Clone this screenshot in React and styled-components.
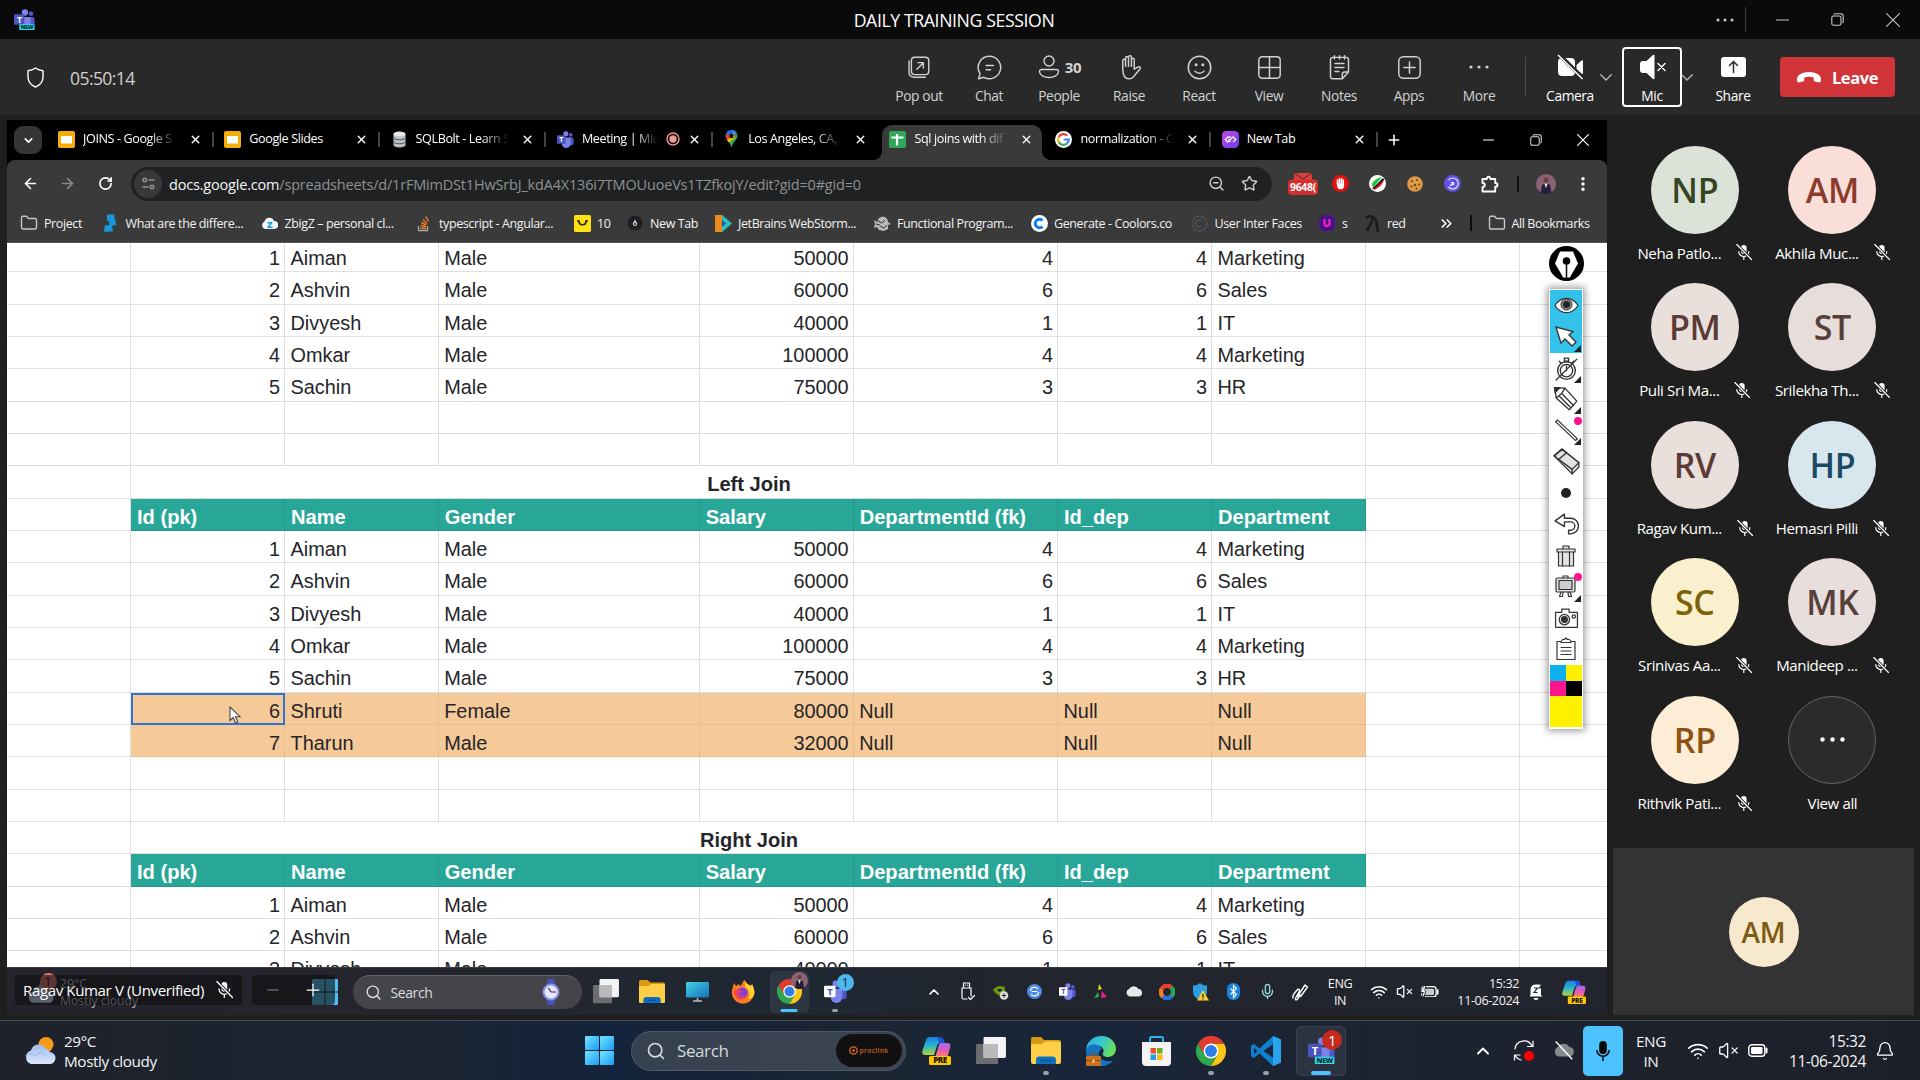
import React from 'react';
import styled, { createGlobalStyle } from 'styled-components';
import {
  ArrowLeft, ArrowRight, RotateCw, Star, ZoomOut, Plus, Minus, X, ChevronDown, ChevronUp, ChevronsRight,
  Wifi, VolumeX, Bell, Mic, Search, Folder, MoreVertical,
} from 'lucide-react';

const Global = createGlobalStyle`
  * { box-sizing: border-box; }
  body { margin: 0; background: #1f1f1f; overflow: hidden; }
  svg { display: block; flex: none; }
`;
const ui = `"Segoe UI", "Open Sans", "Noto Sans", sans-serif`;

/* ---------- shared pieces ---------- */
const Page = styled.div`
  width: 1920px; height: 1080px; display: flex; flex-direction: column;
  background: #1f1f1f; color: #fff; font-family: ${ui}; letter-spacing: -0.025em; white-space: nowrap; overflow: hidden;
`;
const Slot = styled.div`
  width: ${p => p.$w}px; height: ${p => (p.$h ? p.$h + 'px' : '100%')}; margin-left: ${p => p.$ml || 0}px; flex: none;
  display: flex; align-items: center; justify-content: center; position: relative; color: ${p => p.$c || '#fff'};
`;
const Rule = styled.div`
  width: ${p => p.$w || 1}px; height: ${p => p.$h}px; background: ${p => p.$c}; margin-left: ${p => p.$ml || 0}px; flex: none;
`;
const Grow = styled.div`flex: 1;`;

/* ---------- title bar ---------- */
const TitleBar = styled.header`
  height: 39px; flex: none; background: #0a0a0a; display: flex; align-items: center; color: #c8c8c8;
`;
const Side = styled.div`flex: 1 1 0; display: flex; align-items: center; justify-content: ${p => p.$end ? 'flex-end' : 'flex-start'}; padding-left: 14px; height: 100%;`;
const Title = styled.div`font-size: 17.7px; color: #fff; margin-left: -12px; margin-top: 0;`;

/* ---------- meeting toolbar ---------- */
const Toolbar = styled.div`
  height: 76px; flex: none; background: #292929; display: flex; align-items: center; padding-right: 25px;
`;
const Timer = styled.div`font-size: 17.6px; color: #d0d0d0; margin-left: 25px; margin-top: 1px; letter-spacing: -0.035em;`;
const Tool = styled.div`
  width: ${p => p.$w || 70}px; height: 60px; flex: none; margin-left: ${p => p.$ml || 0}px;
  display: flex; flex-direction: column; align-items: center; padding-top: ${p => p.$boxed ? 3 : 5}px;
  color: ${p => p.$bright ? '#fff' : '#d2d2d2'}; font-size: 13.8px; line-height: 18px;
  border: ${p => p.$boxed ? '2px solid #fff' : '0'}; border-radius: 4px;
  > div { height: 30px; display: flex; align-items: center; font-size: 15px; font-weight: 700; gap: 4px; }
  > span { margin-top: 5px; }
`;
const Leave = styled.div`
  width: 115px; height: 40px; margin-left: 17px; border-radius: 4px; background: #d13438; color: #fff;
  display: flex; align-items: center; justify-content: center; gap: 11px; font-weight: 700; font-size: 16.5px; flex: none;
`;

/* ---------- stage ---------- */
const Stage = styled.main`flex: 1; min-height: 0; display: flex; padding: 5px 5px 5px 7px;`;
const Shared = styled.section`width: 1600px; height: 895px; flex: none; display: flex; flex-direction: column; background: #fff; position: relative; overflow: hidden;`;
const TabStrip = styled.div`height: 40px; flex: none; background: #000; display: flex; align-items: center; padding-left: 7px;`;
const TabMenu = styled.div`width: 28px; height: 28px; border-radius: 9px; background: #353535; display: flex; align-items: center; justify-content: center; margin-right: 5.5px;`;
const Tab = styled.div`
  width: ${p => p.$active ? 160 : 166.3}px; height: ${p => p.$active ? 35 : 28}px; flex: none; display: flex; align-items: center;
  margin: ${p => p.$active ? '0 3px' : '-2px 0 0'};
  padding: ${p => p.$active ? '0 7px 7px 7.5px' : '0 10px 0 10.5px'};
  align-self: ${p => p.$active ? 'flex-end' : 'center'};
  background: ${p => p.$active ? '#3b3a3b' : 'transparent'};
  font-size: 12.6px; border-radius: 10px 10px 0 0; position: relative;
  &::after { content: ''; width: 2px; height: 15px; background: ${p => p.$line ? '#444' : 'transparent'}; position: absolute; right: 0; top: 7px; }
`;
const TabFoot = styled.i`
  position: absolute; left: -8px; right: -8px; bottom: 0; height: 8px;
  background: radial-gradient(circle at 0 0, transparent 7.5px, #3b3a3b 8px) left/8px 8px no-repeat,
    radial-gradient(circle at 8px 0, transparent 7.5px, #3b3a3b 8px) right/8px 8px no-repeat;
`;
const TabText = styled.span`
  flex: 1; margin: 0 ${p => p.$tight ? 3 : 10}px 0 8px; overflow: hidden; height: 20px; line-height: 20px;
  mask-image: ${p => p.$fade ? 'linear-gradient(90deg,#000 70%,transparent 100%)' : 'none'};
`;
const BrowserBar = styled.div`
  height: 47px; flex: none; background: #3b3a3b; display: flex; align-items: center; border-radius: 8px 8px 0 0; color: #f4f4f4;
`;
const BarBack = styled.div`background: #000; flex: none;`;
const Omni = styled.div`
  width: 1141px; height: 34px; margin-left: 7px; border-radius: 17px; background: #202122; display: flex; align-items: center; padding-left: 3px; flex: none;
  font-size: 14.5px; color: #8e9194;
  b { font-weight: 400; color: #f5f5f5; }
`;
const TuneBtn = styled.div`width: 28px; height: 28px; border-radius: 50%; background: #38393a; display: flex; align-items: center; justify-content: center; margin-right: 7px;`;
const Url = styled.div`width: 1032px; letter-spacing: -0.013em; padding-top: 1px;`;
const Bookmarks = styled.div`
  height: 36px; flex: none; background: #3b3a3b; display: flex; align-items: center; padding: 0 0 3px 13px; font-size: 12.5px; color: #eee; border-bottom: 1px solid #555;
`;
const Bookmark = styled.div`width: ${p => p.$w}px; display: flex; align-items: center; gap: 6px; flex: none; color: #f2f2f2; `;

/* ---------- sheet ---------- */
const Sheet = styled.div`flex: 1; min-height: 0; overflow: hidden; background: #fff;`;
const Grid = styled.div`
  margin-top: -3px; display: grid; grid-template-columns: 124px 154px 153.7px 261px 154px 204.3px 154px 154px 153.6px 87.4px;
  grid-auto-rows: 32.33px; font-family: "Liberation Sans", Arial, sans-serif; font-size: 19.9px; letter-spacing: 0; color: #222;
`;
const Cell = styled.div`
  border-right: ${p => p.$open ? '0' : '1.5px'} solid ${p => p.$line || '#dfdfe1'}; border-bottom: 1.5px solid ${p => p.$line || '#dfdfe1'};
  background: ${p => p.$bg || '#fff'}; padding: 2px 4px 0 ${p => p.$bold ? 6 : 5.5}px; line-height: 32px; text-align: ${p => p.$align || 'left'};
  grid-column: span ${p => p.$span || 1}; font-weight: ${p => p.$bold ? 700 : 400}; font-size: ${p => p.$bold ? 20.1 : 19.9}px; color: ${p => p.$c || '#25252a'}; overflow: hidden;
  ${p => p.$sel && 'border: 0; outline: 2px solid #2f76d2; outline-offset: -2px; padding-right: 5px; position: relative; overflow: visible;'}
`;
const Pointer = styled.svg`position: absolute; left: 98px; top: 13px;`;

/* ---------- annotation tool ---------- */
const Pen = styled.div`position: absolute; left: 1542px; top: 126px; width: 35px; display: flex; flex-direction: column; gap: 8px;`;
const PenPanel = styled.div`
  background: #fff; border: 1.5px solid #fff; width: 34px; box-shadow: 0 0 7px 2px rgba(0,0,0,.38); height: 440px;
`;
const PenItem = styled.div`
  height: 31.25px; display: flex; align-items: center; justify-content: center; position: relative; background: ${p => p.$on ? '#33c2ea' : '#fff'};
  &::after { content: ''; position: absolute; right: 1px; bottom: 1px; border-left: 7px solid transparent; border-bottom: 7px solid ${p => p.$more ? '#222' : 'transparent'}; }
  &::before { content: ''; position: absolute; right: 0; top: 2px; width: 8px; height: 8px; border-radius: 50%; background: ${p => p.$dot ? '#ff1490' : 'transparent'}; }
`;
const Swatches = styled.div`display: grid; grid-template-columns: 1fr 1fr; grid-template-rows: 15.6px 15.6px 31px;`;
const Swatch = styled.div`background: ${p => p.$c}; grid-column: span ${p => p.$span || 1};`;

/* ---------- shared-screen taskbar ---------- */
const InnerBar = styled.div`
  height: 48px; flex: none; background: linear-gradient(90deg,#25232b 0%,#24262e 30%,#1d2833 50%,#22242e 62%,#22252e 100%);
  border-top: 1px solid #3a3a3e; display: flex; align-items: center; position: relative;
`;
const GhostWeather = styled.div`display: flex; align-items: center; width: 304.5px; padding-left: 20px; gap: 6px; font-size: 12.2px; line-height: 17px; color: #c4c4c4; position: relative; height: 100%; flex: none; letter-spacing: 0;`;
const Overlay = styled.div`
  position: absolute; top: 7px; height: 30px; left: ${p => p.$x}px; width: ${p => p.$w}px; border-radius: 4px;
  background: rgba(14,14,16,.62); display: flex; align-items: center; color: #fff; font-size: 15.1px; padding-left: 8px; gap: 12px;
`;
const InnerSearch = styled.div`
  width: 229px; height: 34px; border-radius: 17px; background: #44444a; border-top: 1px solid #606065; display: flex; align-items: center;
  margin-left: 15px; padding: 0 21px 0 12px; gap: 9px; font-size: 14px; color: #ddd; flex: none;
`;
const TwoLine = styled.div`
  width: ${p => p.$w}px; margin-left: ${p => p.$ml || 0}px; text-align: ${p => p.$align || 'center'}; flex: none;
  font-size: ${p => p.$s}px; line-height: ${p => p.$lh}px; color: #f4f4f4;
`;
const Tile = styled.div`
  width: ${p => p.$s}px; height: ${p => p.$h}px; border-radius: 5px; background: ${p => p.$on ? 'rgba(255,255,255,.07)' : 'transparent'};
  box-shadow: ${p => p.$edge ? 'inset 0 0 0 1px rgba(255,255,255,.07)' : 'none'};
  display: flex; align-items: center; justify-content: center; position: relative;
  &::after { content: ''; position: absolute; bottom: ${p => p.$b || 1}px; left: 50%; transform: translateX(-50%);
    width: ${p => p.$bar || 0}px; height: ${p => p.$bh || 3}px; border-radius: 2px; background: ${p => p.$bar > 10 ? '#4cc2ff' : '#9a9ea6'}; }
`;
const Badge = styled.div`
  position: absolute; top: ${p => p.$y}px; right: ${p => p.$x}px; width: ${p => p.$s}px; height: ${p => p.$h || p.$s}px; border-radius: 50%;
  background: ${p => p.$bg}; color: ${p => p.$c}; font-size: ${p => p.$f}px; display: flex; align-items: center; justify-content: center;
`;

/* ---------- roster ---------- */
const Roster = styled.aside`width: 301px; margin-left: 6px; display: flex; flex-direction: column; flex: none;`;
const People = styled.div`display: grid; grid-template-columns: 137.6px 137.6px; grid-auto-rows: 137.6px; padding: 25.5px 0 0 13px; height: 728px;`;
const Person = styled.div`display: flex; flex-direction: column; align-items: center; gap: 7px;`;
const Avatar = styled.div`
  width: ${p => p.$s || 88}px; height: ${p => p.$s || 88}px; border-radius: 50%; background: ${p => p.$bg}; color: ${p => p.$c};
  font-size: ${p => p.$f || 34}px; font-weight: 600; display: flex; align-items: center; justify-content: center; flex: none;
  border: ${p => p.$ring ? '1px solid #666' : '0'}; letter-spacing: -0.01em;
`;
const PersonName = styled.div`display: flex; align-items: center; justify-content: center; gap: 15px; font-size: 15.1px; line-height: 24px; height: 24px;`;
const SelfTile = styled.div`height: 167px; background: #333; display: flex; align-items: center; justify-content: center;`;

/* ---------- desktop taskbar ---------- */
const Taskbar = styled.footer`
  height: 60px; flex: none; border-top: 1px solid #45484e; display: flex; align-items: center; padding-left: 24px;
  background: linear-gradient(90deg,#1f222b 0%,#1c2532 22%,#14243c 32%,#1b2533 45%,#19263a 56%,#1d2330 72%,#1c2029 100%);
`;
const SearchBox = styled.div`
  width: 275px; height: 40px; border-radius: 20px; background: linear-gradient(90deg,#36414f,#3c4454); border: 1px solid #4e5866; display: flex; align-items: center;
  margin-left: 17px; padding: 0 3px 0 14px; gap: 11px; font-size: 17px; color: #d6d9dd; flex: none;
`;
const Promo = styled.div`width: 66px; height: 33px; border-radius: 17px; background: #111; color: #c9621f; font-size: 6.8px; font-weight: 600; letter-spacing: .3px; display: flex; align-items: center; justify-content: center; gap: 1px;`;
const MicTile = styled.div`width: 40px; height: 50px; border-radius: 5px; background: #4cc2ff; display: flex; align-items: center; justify-content: center; flex: none;`;

/* ---------- drawings ---------- */
const S = ({ w = 24, h, v = '0 0 24 24', children, sw = 1.4, c = 'currentColor' }) => (
  <svg width={w} height={h || w} viewBox={v} fill="none" stroke={c} strokeWidth={sw} strokeLinecap="round" strokeLinejoin="round">{children}</svg>
);
const TeamsLogo = ({ s = 18, badge, light }) => (
  <svg width={s} height={s} viewBox="0 0 24 24">
    <circle cx="19.5" cy="5.5" r="2.6" fill="#5059c9" /><circle cx="12.5" cy="4" r="3.6" fill="#7b83eb" />
    <rect x="15" y="9" width="8.5" height="11" rx="3" fill="#5059c9" /><path d="M7 9h12v9a6 6 0 0 1-12 0z" fill="#7b83eb" />
    <rect x="0" y="6" width="12" height="12" rx="1.2" fill={light ? '#fff' : '#4b53bc'} />
    <text x="6" y="15.6" fontSize="10" fontWeight="700" textAnchor="middle" fill={light ? '#4b53bc' : '#fff'} fontFamily="Open Sans">T</text>
    {badge && <><rect x="6" y="17.5" width="17.5" height="7" rx="1.2" fill="#28dfe3" /><text x="14.8" y="23.2" fontSize="6.4" fontWeight="800" textAnchor="middle" fill="#0b2a3a" fontFamily="Open Sans">NEW</text></>}
  </svg>
);
const ChromeLogo = ({ s = 28 }) => (
  <svg width={s} height={s} viewBox="0 0 48 48">
    <path d="M3.200 12A24 24 0 0 0 24 48L34.400 30 24 24 13.600 30z" fill="#2fa84f" />
    <path d="M24 12H44.800A24 24 0 0 1 24 48L34.400 30 24 24z" fill="#fcc419" />
    <path d="M24 12H44.800A24 24 0 0 0 3.200 12L13.600 30 24 24z" fill="#e33b2e" />
    <circle cx="24" cy="24" r="12" fill="#fff" /><circle cx="24" cy="24" r="9.500" fill="#2f7de9" />
  </svg>
);
const WinLogo = ({ s = 29, dim }) => (
  <svg width={s} height={s} viewBox="0 0 29 29"><defs><linearGradient id="wl" x1="0" y1="0" x2="1" y2="1" gradientUnits="objectBoundingBox"><stop stopColor="#74e6fd" /><stop offset="1" stopColor="#1a9cf5" /></linearGradient></defs>
    <g fill={dim ? '#4fbff0' : 'url(#wl)'}><rect width="14" height="14" rx="1" /><rect x="15" width="14" height="14" rx="1" /><rect y="15" width="14" height="14" rx="1" /><rect x="15" y="15" width="14" height="14" rx="1" /></g></svg>
);
const TaskViewIcon = ({ s = 30 }) => (
  <svg width={s} height={s * 0.93} viewBox="0 0 30 28"><rect y="7" width="22" height="21" rx="1.5" fill="#6c6d70" /><rect x="7.5" width="22.5" height="21" rx="1.5" fill="#f4f4f4" /><rect x="7.5" y="7" width="14.5" height="14" fill="#b9babb" /></svg>
);
const FolderApp = ({ s = 30 }) => (
  <svg width={s} height={s * 0.9} viewBox="0 0 30 27"><path d="M0 2a2 2 0 0 1 2-2h8l3 3h15a2 2 0 0 1 2 2v4H0z" fill="#d99a12" /><path d="M0 7h11l3-2.5h14a2 2 0 0 1 2 2V25a2 2 0 0 1-2 2H2a2 2 0 0 1-2-2z" fill="#ffcf48" /><path d="M5 27v-4a3.5 3.5 0 0 1 3.500-3.500h13A3.500 3.500 0 0 1 25 23v4z" fill="#0f6fc0" /><path d="M10 23.500h10" stroke="#0a4e8c" strokeWidth="1.400" /></svg>
);
const Copilot = ({ s = 29 }) => (
  <svg width={s} height={s} viewBox="0 0 29 29"><defs>
    <linearGradient id="cpa" x1="0" y1="0" x2="0" y2="1"><stop stopColor="#1a7fe8" /><stop offset=".5" stopColor="#29b6c9" /><stop offset="1" stopColor="#b8d434" /></linearGradient>
    <linearGradient id="cpb" x1="0" y1="0" x2="0" y2="1"><stop stopColor="#a06be8" /><stop offset=".5" stopColor="#e45bb8" /><stop offset="1" stopColor="#ff8a4c" /></linearGradient></defs>
    <path d="M8 1h10c2 0 3 1 3.500 3l1 3h-4c-2 0-3 1-3.600 3L12 19H3c-2.500 0-3.300-2-2.500-4.500L4 4c.7-2 2-3 4-3z" fill="url(#cpa)" />
    <path d="M12 1h6c2 0 3 1 3.500 3l1 3.500h-5L15 1z" fill="#1b52d8" />
    <path d="M18 7h7c3 0 4 2 3.200 4.500L26 19c-.7 2-2 3-4 3h-9l3.600-12z" fill="url(#cpb)" />
    <rect x="7" y="20" width="22" height="9" rx="1.500" fill="#ffc700" /><text x="18" y="27.300" fontSize="8" fontWeight="800" textAnchor="middle" fill="#1a1a1a" fontFamily="Open Sans">PRE</text></svg>
);
const Cloudy = ({ s = 32 }) => (
  <svg width={s} height={s * 0.85} viewBox="0 0 32 27"><defs><linearGradient id="cl" x1="0" y1="0" x2="0" y2="1"><stop stopColor="#9fbdf0" /><stop offset="1" stopColor="#dce8fb" /></linearGradient></defs>
    <circle cx="22" cy="7.500" r="7.500" fill="#f59a1b" /><path d="M7.500 27a7 7 0 0 1-.5-13.500A8 8 0 0 1 22 12a6 6 0 0 1 4 3 6 6 0 0 1-1 12z" fill="url(#cl)" /><path d="M1 19c3-4 8-3 10 0 3-4 9-4 11 0" stroke="#86a8e6" fill="none" opacity=".6" /></svg>
);
const Edge = () => (
  <svg width="30" height="30" viewBox="0 0 30 30"><defs><linearGradient id="eg" x1="0" y1="0" x2="1" y2=".4"><stop stopColor="#2fa8e8" /><stop offset=".6" stopColor="#3ac8c8" /><stop offset="1" stopColor="#6ade5a" /></linearGradient></defs>
    <path d="M0 15C0 6 7 0 15.500 0 24 0 30 6 30 13c0 5-4 8-8 8s-6-2-5-4c1-1.500 1-3-.5-5S12 9 8.500 9 1 12 0 15z" fill="url(#eg)" /><path d="M0 15c0-4 5-7.500 9.500-6.500 3 .5 5.500 2.500 6.500 4.500-3 1-4.500 5-2.500 8s9 6 14 3c-3 4-7.500 6-12 6C7 30 0 24 0 15z" fill="#1475c4" />
    <rect x="0" y="20" width="15" height="10" rx="1" fill="#c9731c" /><path d="M5 20v-2h5v2" stroke="#8f4b0c" strokeWidth="1.400" fill="none" /><path d="M0 24.500h15" stroke="#8f4b0c" /><rect x="6.500" y="23.500" width="2" height="3" fill="#ffd071" /></svg>
);
const Store = () => (
  <svg width="29" height="30" viewBox="0 0 29 30"><path d="M8 6V2.500A1.500 1.500 0 0 1 9.500 1h10A1.500 1.500 0 0 1 21 2.500V6" stroke="#28b3ec" strokeWidth="2" fill="none" /><path d="M0 6h29v20a4 4 0 0 1-4 4H4a4 4 0 0 1-4-4z" fill="#f3f3f3" /><rect x="8.500" y="12" width="5.500" height="5.500" fill="#e8502a" /><rect x="15" y="12" width="5.500" height="5.500" fill="#6fae1c" /><rect x="8.500" y="18.500" width="5.500" height="5.500" fill="#1b9fe6" /><rect x="15" y="18.500" width="5.500" height="5.500" fill="#fab61a" /></svg>
);
const VsCode = () => (
  <svg width="30" height="30" viewBox="0 0 30 30"><path d="M22 0 8.500 12.400 3 8 0 9.500v11L3 22l5.500-4.400L22 30l8-3.500v-23z" fill="#0f7fd0" /><path d="M22 8.200v13.600L12.500 15z" fill="#1b2533" /><path d="M3 11.700v6.600L6.200 15z" fill="#1b2533" /><path d="M22 0l8 3.500v23L22 30z" fill="#2ba4ee" /></svg>
);
const MicMuted = ({ s = 16, c = '#fff' }) => (
  <svg width={s} height={s * 1.02} viewBox="0 0 16 16.300"><rect x="5" y="1" width="5.600" height="9" rx="2.800" fill={c} /><path d="M2.800 7.500a5 5 0 0 0 10 0M7.800 12.500v3" stroke={c} strokeWidth="1.200" fill="none" strokeLinecap="round" /><path d="M1 .8 15.200 15" stroke="#1f1f1f" strokeWidth="3" /><path d="M.8.500 15.500 15.500" stroke={c} strokeWidth="1.200" strokeLinecap="round" /></svg>
);
const Restore = ({ s = 13, c = '#c8c8c8' }) => (<S w={s} v="0 0 13 13" sw={1.100} c={c}><rect x=".8" y="3" width="9.200" height="9.200" rx="1.800" /><path d="M3.200 1.200c.3-.4.700-.5 1.300-.5h5.300a2.400 2.400 0 0 1 2.400 2.400v5.300c0 .6-.1 1-.5 1.300" /></S>);
const SlidesIcon = () => (<svg width="17" height="17" viewBox="0 0 17 17"><rect width="17" height="17" rx="2" fill="#f5ae08" /><rect x="3" y="5" width="11" height="7.500" fill="#fff" /></svg>);
const DbIcon = () => (<svg width="17" height="17" viewBox="0 0 17 17"><path d="M2.500 3v11c0 1.500 3 2.500 6 2.500s6-1 6-2.500V3z" fill="#b9c0c4" /><ellipse cx="8.500" cy="3" rx="6" ry="2.500" fill="#e4e8ea" /><path d="M2.500 7c2 2.300 10 2.300 12 0M2.500 11c2 2.300 10 2.300 12 0" stroke="#44525a" fill="none" /></svg>);
const MapPin = () => (<svg width="17" height="18" viewBox="0 0 17 18"><path d="M8.500 0A6 6 0 0 0 2.700 4.200L8.500 7z" fill="#1a73e8" /><path d="M8.500 0a6 6 0 0 1 5.800 4.200L8.500 6z" fill="#4285f4" /><path d="M2.700 4.200C2.200 6.300 2.700 8 4 10l5-5z" fill="#ea4335" /><path d="M14.300 4.200C15.500 10 9.500 11 8.500 18 8 14 5.500 12 4 10l4.500-3z" fill="#34a853" /><path d="M4 10 11 3.500l1 4-6 5z" fill="#fbbc05" /><circle cx="8.500" cy="6" r="2.200" fill="#111" /></svg>);
const SheetsIcon = () => (<svg width="17" height="17" viewBox="0 0 17 17"><rect width="17" height="17" rx="2" fill="#2fa758" /><path d="M2.500 6.500h12M8 3v11.500" stroke="#fff" strokeWidth="2.200" /></svg>);
const GoogleIcon = () => (<svg width="17" height="17" viewBox="0 0 17 17"><circle cx="8.500" cy="8.500" r="8.500" fill="#fff" /><g fill="none" strokeWidth="2.200"><path d="M12.300 4.700A5.300 5.300 0 0 0 3.800 6" stroke="#ea4335" /><path d="M3.800 6a5.300 5.300 0 0 0 0 5" stroke="#fbbc05" /><path d="M3.800 11a5.300 5.300 0 0 0 8 1.700" stroke="#34a853" /><path d="M11.800 12.700a5 5 0 0 0 2-4.200H8.800" stroke="#4285f4" /></g></svg>);
const PurpleIcon = () => (<svg width="17" height="17" viewBox="0 0 17 17"><defs><linearGradient id="pp" x1="0" y1="0" x2="1" y2="1"><stop stopColor="#c04be8" /><stop offset="1" stopColor="#6a3cf0" /></linearGradient></defs><rect width="17" height="17" rx="4.500" fill="url(#pp)" /><path d="M8.500 10.800 6.200 8.500M8.800 6.200 6 5.900 3.300 8.500l2.500 2.600L11 5.900l2.700 2.600-2.700 2.600" stroke="#fff" strokeWidth="1.300" fill="none" /></svg>);
const RecDot = () => (<svg width="14" height="14" viewBox="0 0 14 14"><circle cx="7" cy="7" r="6" fill="none" stroke="#ef9a94" strokeWidth="1.400" /><circle cx="7" cy="7" r="3.700" fill="#ef9a94" /></svg>);
const Photo = ({ s = 20 }) => (<svg width={s} height={s} viewBox="0 0 20 20"><circle cx="10" cy="10" r="10" fill="#8a6273" /><path d="M4 18a8 8 0 0 1 12 0 10 10 0 0 1-12 0zM5 17l1-6 4-2 4 2 1 6-5 3z" fill="#241d3c" /><circle cx="10" cy="6" r="2.600" fill="#6b4438" /><path d="M8.500 9.500h3l-1.500 5z" fill="#f4e8ea" /></svg>);
const Mail = () => (<svg width="30" height="24" viewBox="0 0 30 24"><path d="M6 1h18v7H6z" fill="#d7403d" /><path d="M6 1l9 6 9-6" stroke="#5a2322" fill="none" /><rect x="0" y="7.500" width="30" height="15.500" rx="4" fill="#d42f2f" /><text x="15" y="19.300" fontSize="10.500" fontWeight="700" textAnchor="middle" fill="#fff" fontFamily="Open Sans" letterSpacing="-.3">9648(</text></svg>);
const HandIcon = () => (<svg width="17" height="17" viewBox="0 0 17 17"><circle cx="8.500" cy="8.500" r="8.500" fill="#e4100f" /><path d="M5.500 5v4M7.500 3.800V9M9.500 3.800V9M11.300 5v5" stroke="#fff" strokeWidth="1.600" strokeLinecap="round" /><path d="M4.700 8.500h7.400V11a3.500 3.500 0 0 1-6.800 1z" fill="#fff" /></svg>);
const Feather = () => (<svg width="17" height="17" viewBox="0 0 17 17"><circle cx="8.500" cy="8.500" r="8.500" fill="#fff" /><path d="M3 10C3 6 8 3 13 2L4 13z" fill="#22c43a" /><path d="M5 13 15 4c0 3-4 9-10 11z" fill="#e81e2a" /><path d="M3 14 14 3l1 1.500L5 14z" fill="#0c0c0c" /></svg>);
const Cookie = () => (<svg width="16" height="16" viewBox="0 0 16 16"><circle cx="8" cy="8" r="7.800" fill="#dd9a45" /><g fill="#7b4313"><circle cx="5" cy="5" r="1.100" /><circle cx="10" cy="4" r="1" /><circle cx="8" cy="9" r="1.200" /><circle cx="12" cy="8.500" r="1" /><circle cx="4.500" cy="10.500" r="1" /><circle cx="9.500" cy="12.700" r="1" /></g></svg>);
const PurpleRound = () => (<svg width="17" height="17" viewBox="0 0 17 17"><circle cx="8.500" cy="8.500" r="8.500" fill="#6252e6" /><path d="M4.500 5a5.500 5.500 0 1 1 0 7M6 11l3.500-3.500M6.800 7.500h2.700v2.700" stroke="#e9e6ff" strokeWidth="1.200" fill="none" /></svg>);
const Puzzle = () => (<S w={18} v="0 0 18 18" sw={1.900}><path d="M1.500 4h4.300c-.2-3 3.800-3 3.600 0h4.800v4c3 0 3 3.800 0 3.800v4.700H1.500v-4.300c3-.2 3-4 0-4.200z" /></S>);
const Tune = () => (<S w={13} v="0 0 13 13" sw={1.600}><circle cx="2.800" cy="3" r="1.700" /><path d="M7 3h5M1 10h5" /><circle cx="10" cy="10" r="1.700" /></S>);

const PencilMark = () => (<svg width="18" height="18" viewBox="0 0 18 18"><path d="M5 .500h7.500v6.500H5zM7 6.500l6-1.500 1.500 6-7 1zM3 11l7 .500 1 6-9 .200z" fill="#1597d8" /></svg>);
const ZCloud = () => (<svg width="17" height="14" viewBox="0 0 17 14"><path d="M4 13a4 4 0 0 1-.5-7.500A5 5 0 0 1 13 5a4 4 0 0 1 .5 8z" fill="#eef8fd" /><text x="8.500" y="11.500" fontSize="9" fontWeight="800" textAnchor="middle" fill="#1b9ad0" fontFamily="Open Sans">Z</text></svg>);
const StackIcon = () => (<svg width="14" height="17" viewBox="0 0 14 17"><path d="M1.500 11v4.500h9V11" stroke="#aaa" strokeWidth="1.300" fill="none" /><path d="M3.500 13.300h5.500M3.600 10.500l5.500 1M4.300 7.500l5 2.500M6 4.500l4 4M9 1.500l2.500 5" stroke="#e87a28" strokeWidth="1.500" /></svg>);
const Smile = () => (<svg width="17" height="17" viewBox="0 0 17 17"><rect width="17" height="17" rx="1.500" fill="#ffe010" /><path d="M3 6h2c0 5 7 5 7 0h2" stroke="#222" strokeWidth="1.700" fill="none" /></svg>);
const DarkDrop = () => (<svg width="16" height="16" viewBox="0 0 16 16"><circle cx="8" cy="8" r="7.500" fill="#1e1f22" /><path d="M8 4.500 10 8a2.200 2.200 0 1 1-4 0z" fill="#c9c9c9" /><circle cx="8" cy="9" r="1" fill="#222" /></svg>);
const JB = () => (<svg width="17" height="17" viewBox="0 0 17 17"><path d="M0 0h8v17H0z" fill="#e88a1c" /><path d="M7 0l10 8.500L7 17z" fill="#28c3b8" /><path d="M7 5v7l4-3.500z" fill="#2c4bb8" /></svg>);
const Skull = () => (<svg width="17" height="15" viewBox="0 0 17 15"><path d="M5 2c5-3 9 0 9 4l3 2-3 1v4l-4 2-5-1-2-3-3 1 1-4-1-4 3 2z" fill="#b9b9b9" /><path d="M4 5l4 2 3-3M6 10l4 2 3-3M2 8l4 1" stroke="#333" fill="none" /></svg>);
const CoolC = () => (<svg width="17" height="17" viewBox="0 0 17 17"><circle cx="8.500" cy="8.500" r="8.500" fill="#fff" /><path d="M11.500 5.500a4.200 4.200 0 1 0 0 6" stroke="#0b7ff0" strokeWidth="3" fill="none" /></svg>);
const DimRing = () => (<svg width="17" height="17" viewBox="0 0 17 17"><circle cx="8.500" cy="8.500" r="7.500" fill="none" stroke="#4a5052" strokeWidth="1.400" /><path d="M10.500 6a3.500 3.500 0 1 0 0 5" stroke="#4d5658" strokeWidth="1.500" fill="none" /></svg>);
const UIcon = () => (<svg width="16" height="16" viewBox="0 0 16 16"><rect width="16" height="16" rx="6" fill="#45128a" /><path d="M5.500 4v4.500a2.500 2.500 0 0 0 5 0V4" stroke="#f01fb8" strokeWidth="2.300" fill="none" /></svg>);
const Walker = () => (<svg width="15" height="17" viewBox="0 0 15 17"><path d="M1 3c4-3 8-2 10 2l2 12M8 3C7 8 4 11 2 16" stroke="#1a1a1a" strokeWidth="2.500" fill="none" /></svg>);

const RoundSync = () => (<svg width="15" height="15" viewBox="0 0 15 15"><circle cx="7.500" cy="7.500" r="7.500" fill="#4b8ae6" /><path d="M3.300 7A4.200 4.200 0 0 1 11 5M11.700 8A4.200 4.200 0 0 1 4 10M4.500 7.500h6" stroke="#fff" strokeWidth="1.200" fill="none" /></svg>);
const Swirl = () => (<svg width="16" height="16" viewBox="0 0 16 16"><g fill="none" strokeWidth="4.500"><path d="M2.800 5A5.700 5.700 0 0 1 12 3.500" stroke="#e8402f" /><path d="M12 3.500A5.700 5.700 0 0 1 12.500 12" stroke="#2ca84e" /><path d="M12.500 12A5.700 5.700 0 0 1 4 12.500" stroke="#2d6de0" /><path d="M4 12.500A5.700 5.700 0 0 1 2.800 5" stroke="#f0801c" /></g></svg>);
const Shield = () => (<svg width="17" height="18" viewBox="0 0 17 18"><path d="M8 0c2 2 4.500 2.500 7 2.500V8c0 5-3 7.500-7 9-4-1.500-7-4-7-9V2.500C3.500 2.500 6 2 8 0z" fill="#2aa0e0" /><path d="M11 7l6 10.500H5z" fill="#fcc92a" /><path d="M11 11v3.500M11 15.500v1" stroke="#222" strokeWidth="1.300" /></svg>);
const BatteryIcon = ({ w = 20, charge }) => (<svg width={w} height={w * 0.65} viewBox="0 0 20 13"><rect x=".8" y=".8" width="16" height="11.400" rx="3" fill="none" stroke="#fff" strokeWidth="1.400" /><rect x="3" y="3" width="11.500" height="7" rx="1.200" fill={charge ? '#ccc' : '#fff'} /><path d="M18.500 4.500v4" stroke="#fff" strokeWidth="2" strokeLinecap="round" />{charge && <path d="M5 0 1 6.500h3L2.500 12" stroke="#22252e" strokeWidth="3" fill="#fff" />}{charge && <path d="M4.500 0 1 6h3L2.500 11" stroke="#fff" strokeWidth="1.300" fill="#fff" />}</svg>);
const Usb = () => (<S w={15} h={19} v="0 0 15 19" sw={1.200}><path d="M3.500 6V1h6v5M2 6h9v8M2 6v9.500c0 1 .6 1.500 1.500 1.500H7M5.300 3.200h.1M7.600 3.200h.1M8.500 15.500l2 2 4-4" /></S>);
const Nvidia = () => (<svg width="17" height="17" viewBox="0 0 17 17"><path d="M1 7c3-4 7-5 12-3v9c-4 1-9-1-12-6z" fill="#5f9400" /><path d="M4 7c2-2.500 5-2.500 7 0-2 3-5 3-7 0z" fill="#22252e" stroke="#9cc83a" /><circle cx="12" cy="12.500" r="4.300" fill="#ddd" /><path d="M9.800 12.500h4.400M12 10.300v4.400" stroke="#333" /></svg>);
const ColorFan = () => (<svg width="15" height="17" viewBox="0 0 15 17"><path d="M6 1l3 5-4 1z" fill="#e8d81c" /><path d="M5 9l-4 6 5-1z" fill="#2bb04a" /><path d="M9 8l5 6-6 1z" fill="#e8208c" /></svg>);
const CloudSmall = ({ off, w = 18 }) => (<svg width={w} height={w * 0.85} viewBox="0 0 20 17"><path d="M5 14a4.500 4.500 0 0 1-.5-8.500A6 6 0 0 1 15 5.500 4.300 4.300 0 0 1 15.500 14z" fill={off ? '#85888d' : '#e9e9ea'} />{off && <path d="M2.500.5l15 16" stroke="#fff" strokeWidth="1.300" />}</svg>);
const Pen2 = () => (<S w={18} v="0 0 18 18" sw={1.400}><path d="M2 15c-1-3 2-5 4-8 2-2 3 0 2 2-1 3-5 7-3 8 2 0 3-3 4-5M8 11l6-9 2.500 2L10 13l-3 1z" /></S>);
const Watch = () => (<svg width="19" height="26" viewBox="0 0 19 26"><path d="M5.500 0h7l1 7h-9zM4.500 19h9l-1 7h-7z" fill="#4c53b8" /><circle cx="9" cy="13" r="8.500" fill="#8c90e8" /><circle cx="9" cy="13" r="6.500" fill="#e8e8fb" /><path d="M9 13 6.500 9M9 13h5" stroke="#333" strokeWidth="1.200" /></svg>);
const Monitor = () => (<svg width="23" height="20" viewBox="0 0 23 20"><defs><linearGradient id="mo" x1="0" y1="0" x2="1" y2="1"><stop stopColor="#46d2e8" /><stop offset="1" stopColor="#1570b8" /></linearGradient></defs><rect width="23" height="15.500" rx="1" fill="url(#mo)" /><path d="M11.500 16v3M7 19h9" stroke="#bbb" strokeWidth="1.600" /></svg>);
const Firefox = () => (<svg width="24" height="24" viewBox="0 0 24 24"><path d="M3 3l2 3 3-2 1 2c2 0 2-5 5-6 0 3 4 5 6 6l1-2c2 4 3 8 2 11a11.300 11.300 0 0 1-22 0C0 11 2 7 3 3z" fill="#ff7a1f" /><path d="M14 0c0 3 4 5 6 6l1-2c2 4 3 8 2 11-2 3-4 4-6 4 3-5 1-10-3-12z" fill="#ffd22e" /><circle cx="11" cy="13" r="5.500" fill="#7a3fe0" /><path d="M2 12c2-3 5-4 8-2l2 2-4 1c1 3 5 4 8 1-1 5-6 7-10 5z" fill="#f0405a" opacity=".75" /></svg>);

const tools = [
  ['Pop out', <S w={26} sw={1.300}><rect x="5" y="3" width="16" height="16" rx="3" /><path d="M2.800 6.500V17a4.500 4.500 0 0 0 4.500 4.500h10.500M10 14l6-6M11 8h5v5" /></S>],
  ['Chat', <S w={27} sw={1.300}><path d="M12 2a10 10 0 1 1-5 18.700L2.300 22l1.300-4.500A10 10 0 0 1 12 2zM9 10.200h6.500M9 14h4" /></S>],
  ['People', <><S w={24} sw={1.400}><circle cx="12" cy="6" r="5" /><path d="M4.500 14.500h15c1.200 0 2 .8 2 2 0 3.500-4.500 6-9.500 6s-9.500-2.500-9.500-6c0-1.200.8-2 2-2z" /></S>30</>],
  ['Raise', <S w={27} sw={1.300}><path d="M6 13V6c0-1.800 2.500-1.800 2.500 0v5V3.500c0-1.800 2.600-1.800 2.600 0V11 2.800c0-1.800 2.600-1.800 2.600 0V11 5c0-1.700 2.500-1.700 2.500 0v8.500l3.500-2c1.500-.6 2.600.5 1.600 1.800L17 18.500C15.500 20.800 14 22 11.500 22 7.500 22 6 18 6 13z" /></S>],
  ['React', <S w={27} sw={1.300}><circle cx="12" cy="12" r="10" /><path d="M8 15.200c2 2.500 6 2.500 8 0" /><circle cx="9" cy="9.500" r=".7" fill="currentColor" /><circle cx="15" cy="9.500" r=".7" fill="currentColor" /></S>],
  ['View', <S w={27} sw={1.300}><rect x="2.500" y="2.500" width="19" height="19" rx="3" /><path d="M12 2.500v19M2.500 12h19" /></S>],
  ['Notes', <S w={27} sw={1.300}><path d="M4 5a2 2 0 0 1 2-2h12a2 2 0 0 1 2 2v11l-5.500 6H6a2 2 0 0 1-2-2zM20 16h-3.500a2 2 0 0 0-2 2v4M7.500 1.500v3M12 1.500v3M16.500 1.500v3M8 8.500h8M8 12h8M8 15.500h3.500" /></S>],
  ['Apps', <S w={27} sw={1.300}><rect x="2.500" y="2.500" width="19" height="19" rx="4" /><path d="M12 7v10M7 12h10" /></S>],
  ['More', <S w={24} sw={0}><g fill="currentColor"><circle cx="4" cy="12" r="1.600" /><circle cx="12" cy="12" r="1.600" /><circle cx="20" cy="12" r="1.600" /></g></S>],
];
const tabs = [
  ['JOINS - Google S', <SlidesIcon />, 1, 1], ['Google Slides', <SlidesIcon />, 0, 1], ['SQLBolt - Learn S', <DbIcon />, 1, 1],
  ['Meeting | Mic', <TeamsLogo s={17} />, 1, 1, 'rec'], ['Los Angeles, CA,', <MapPin />, 1, 0], ['Sql joins with dif', <SheetsIcon />, 1, 0, 'active'],
  ['normalization - G', <GoogleIcon />, 1, 1], ['New Tab', <PurpleIcon />, 0, 1],
];
const marks = [
  ['Project', <Folder size={18} strokeWidth={1.800} color="#c8c8c8" />, 81.500], ['What are the differe...', <PencilMark />, 159], ['ZbigZ – personal cl...', <ZCloud />, 154.500],
  ['typescript - Angular...', <StackIcon />, 158], ['10', <Smile />, 53], ['New Tab', <DarkDrop />, 88], ['JetBrains WebStorm...', <JB />, 159],
  ['Functional Program...', <Skull />, 157], ['Generate - Coolors.co', <CoolC />, 160.500], ['User Inter Faces', <DimRing />, 127.500], ['s', <UIcon />, 45], ['red', <Walker />, 70],
];
const people = [
  ['NP', 'Neha Patlo...', '#dbe3d8', '#35451f'], ['AM', 'Akhila Muc...', '#fadfd8', '#8b3a2c'], ['PM', 'Puli Sri Ma...', '#e9dfdb', '#5c3a36'],
  ['ST', 'Srilekha Th...', '#e7dedb', '#57403b'], ['RV', 'Ragav Kum...', '#e9dfdb', '#5c3a36'], ['HP', 'Hemasri Pilli', '#d8e6ed', '#1d4a63'],
  ['SC', 'Srinivas Aa...', '#fbf0ce', '#7b6108'], ['MK', 'Manideep ...', '#e8dedb', '#57403b'], ['RP', 'Rithvik Pati...', '#fdecd6', '#8a5312'],
];
const rows = [
  ['1', 'Aiman', 'Male', '50000', '4', '4', 'Marketing'], ['2', 'Ashvin', 'Male', '60000', '6', '6', 'Sales'], ['3', 'Divyesh', 'Male', '40000', '1', '1', 'IT'],
  ['4', 'Omkar', 'Male', '100000', '4', '4', 'Marketing'], ['5', 'Sachin', 'Male', '75000', '3', '3', 'HR'],
];
const extra = [['6', 'Shruti', 'Female', '80000', 'Null', 'Null', 'Null'], ['7', 'Tharun', 'Male', '32000', 'Null', 'Null', 'Null']];
const head = ['Id (pk)', 'Name', 'Gender', 'Salary', 'DepartmentId (fk)', 'Id_dep', 'Department'];

const Row = ({ data, bg, line, sel }) => (
  <>
    <Cell />
    {data.map((t, i) => {
      const num = /^\d+$/.test(t);
      return (
        <Cell key={i} $bg={bg} $line={line} $align={num ? 'right' : 'left'} $sel={sel && i === 0}>
          {t}
          {sel && i === 0 && <Pointer width="13" height="19" viewBox="0 0 13 19"><path d="M1 1v13.500l3.200-3 2.300 5.500 2.300-1-2.300-5.300H11z" fill="#fff" stroke="#444" strokeWidth="1.100" /></Pointer>}
        </Cell>
      );
    })}
    <Cell /><Cell $open />
  </>
);
const TitleRow = ({ text }) => (<><Cell /><Cell $span={7} $bold $align="center">{text}</Cell><Cell /><Cell $open /></>);
const HeadRow = () => (<><Cell />{head.map(h => <Cell key={h} $bold $bg="#28a698" $line="#239888" $c="#fff">{h}</Cell>)}<Cell /><Cell $open /></>);
const EmptyRow = () => <Row data={['', '', '', '', '', '', '']} />;

const G = '#e3e3e3', K = '#333';
const penItems = [
  [<svg width="25" height="17" viewBox="0 0 25 17"><path d="M1 8.500C7-1 18-1 24 8.500 18 18 7 18 1 8.500z" fill="#fff" stroke={K} strokeWidth="1.200" /><circle cx="12.500" cy="7.500" r="5.500" fill="#888" stroke={K} /><circle cx="12.500" cy="7.500" r="3.500" fill="#222" /></svg>, 1],
  [<svg width="24" height="24" viewBox="0 0 24 24"><path d="M2 2l5 16 4-4 7 7 4-4-7-7 4-3.500z" fill="#fff" stroke={K} strokeWidth="1.300" /></svg>, 1, 1],
  [<S w={25} c={K} sw={1.300}><circle cx="12" cy="14" r="8.500" /><circle cx="12" cy="14" r="6" /><path d="M10 2h4v3h-4zM5 5l2 2M19 5l-2 2M12 9.500V14M2 23 22 3" /></S>, 0, 1],
  [<S w={26} c={K} sw={1.200}><path d="M1.500 1.500 11 2l11 12-7 8L3 11z" fill="#fff" /><path d="M1.500 1.500h5L2 6z" fill={K} /><path d="M11 2 8 7l-5 4M8 7l11 11M5.500 9l11 11" /></S>, 0, 1],
  [<S w={25} c={K} sw={1.200}><path d="M1.500 3.500l2-1.500 19 18-2 1.500z" fill="#fff" /></S>, 0, 1, 1],
  [<S w={27} c={K} sw={1.200}><path d="M1 7l7-6 15 12v4l-6 6z" fill={G} /><path d="M1 7l7-6 4 3.200-7 6zM23 13l-6 6M17 23v-4L5 10" /></S>],
  [<svg width="10" height="10" viewBox="0 0 10 10"><circle cx="5" cy="5" r="5" fill="#222" /></svg>],
  [<S w={25} c={K} sw={1.300}><path d="M1 8.500 10 2v4h6a7.500 7.500 0 0 1 0 15h-2v-3.500h2a4 4 0 0 0 0-8h-6V14z" fill="#fff" /></S>],
  [<S w={24} c={K} sw={1.200}><path d="M3 5h18v3H3zM9 5V2h6v3M4.500 8v14h15V8" fill={G} /><path d="M8.500 8v14M15.500 8v14" /></S>],
  [<S w={24} c={K} sw={1.200}><rect x="2" y="3" width="19" height="14" rx="1.500" fill={G} /><rect x="5" y="5.500" width="13" height="9" fill="#ccc" /><path d="M9 3V1h5v2M7 17l-1.500 4.500h3L9 17M14 17l.500 4.500h3L16 17" /></S>, 0, 1, 1],
  [<S w={25} c={K} sw={1.200}><path d="M1.500 6h6V3h7v3h8v14.500h-21z" fill="#fff" /><circle cx="10" cy="13" r="5" fill={G} /><circle cx="10" cy="13" r="2.800" fill={K} /><circle cx="19" cy="10" r="1.600" /></S>],
  [<S w={24} c={K} sw={1.200}><path d="M3 4.500h4l1.500-2h2l1.500-1.500L13.500 2.500h2l1.500 2h4V22.500H3zM7 5.500h10M7 10.500h10M7 14h10M7 17.500h10" /></S>],
];
const Lang = p => <TwoLine {...p}>ENG<br />IN</TwoLine>;
const Clock = p => <TwoLine {...p}>15:32<br />11-06-2024</TwoLine>;

export default function App() {
  return (
    <Page>
      <Global />
      <TitleBar>
        <Side><TeamsLogo s={21} badge /></Side>
        <Title>DAILY TRAINING SESSION</Title>
        <Side $end>
          <Slot $w={40}><S w={18} v="0 0 18 4" h={4} sw={0}><g fill="#c8c8c8"><circle cx="2" cy="2" r="1.500" /><circle cx="9" cy="2" r="1.500" /><circle cx="16" cy="2" r="1.500" /></g></S></Slot>
          <Rule $h={25} $c="#3c3c3c" />
          <Slot $w={55} $ml={9}><S w={13} h={2} v="0 0 13 2" sw={1.100} c="#c8c8c8"><path d="M.5 1h12" /></S></Slot>
          <Slot $w={55}><Restore /></Slot>
          <Slot $w={55}><S w={14} v="0 0 14 14" sw={1.100} c="#c8c8c8"><path d="M.6.600l12.800 12.800M13.400.600.600 13.400" /></S></Slot>
        </Side>
      </TitleBar>

      <Toolbar>
        <Slot $w={19} $ml={26}><S w={17} h={21} v="0 0 17 21" sw={1.400}><path d="M8.500 1C11 2.800 13 3.500 16 3.700V10c0 5-2.800 8-7.500 10C3.800 18 1 15 1 10V3.700C4 3.500 6 2.800 8.500 1z" /></S></Slot>
        <Timer>05:50:14</Timer>
        <Grow />
        {tools.map(([t, i]) => <Tool key={t}><div>{i}</div><span>{t}</span></Tool>)}
        <Rule $h={40} $c="#4a4a4a" $ml={10.500} />
        <Tool $w={60} $ml={14.500} $bright>
          <div><svg width="27" height="26" viewBox="0 0 27 26"><rect x="1" y="4" width="17" height="18" rx="4" fill="#fff" /><path d="M19.500 11l5-4.500c.6-.4 1.500 0 1.500.8V19c0 .8-.9 1.200-1.500.8l-5-4.500z" fill="#fff" /><path d="M2 .5 27 25" stroke="#292929" strokeWidth="4" /><path d="M1 1l24.500 24" stroke="#fff" strokeWidth="1.500" /></svg></div>
          <span>Camera</span>
        </Tool>
        <Slot $w={12} $c="#bbb"><S w={12} h={7} v="0 0 12 7" sw={1.300}><path d="M.8.800 6 6 11.200.8" /></S></Slot>
        <Tool $w={60} $ml={10} $boxed $bright>
          <div><svg width="27" height="26" viewBox="0 0 27 26"><path d="M15.500 1.500v23c0 .8-.8 1-1.500.5L7.500 19H4a3 3 0 0 1-3-3v-6a3 3 0 0 1 3-3h3.500L14 1c.7-.6 1.500-.3 1.500.5z" fill="#fff" /><path d="M19 9.500l7 7M26 9.500l-7 7" stroke="#fff" strokeWidth="1.400" strokeLinecap="round" /></svg></div>
          <span>Mic</span>
        </Tool>
        <Slot $w={10} $c="#bbb"><S w={12} h={7} v="0 0 12 7" sw={1.300}><path d="M.8.800 6 6 11.200.8" /></S></Slot>
        <Tool $w={60} $ml={11} $bright>
          <div><svg width="25" height="20" viewBox="0 0 25 20"><rect width="25" height="20" rx="3" fill="#fff" /><path d="M12.500 15.500V5M8.500 8.500l4-4 4 4" stroke="#292929" strokeWidth="1.500" fill="none" strokeLinecap="round" /></svg></div>
          <span>Share</span>
        </Tool>
        <Leave><svg width="24" height="11" viewBox="0 0 24 11"><path d="M12 0C19 0 24 3 24 7c0 3-.8 3.800-2.500 3.300L18 9.400c-1-.3-1.300-1-1.300-2V5.600c-3-1-6.400-1-9.400 0v1.800c0 1-.3 1.700-1.300 2l-3.500.9C.8 10.800 0 10 0 7c0-4 5-7 12-7z" fill="#fff" /></svg>Leave</Leave>
      </Toolbar>

      <Stage>
        <Shared>
          <TabStrip>
            <TabMenu><ChevronDown size={13} strokeWidth={3} /></TabMenu>
            {tabs.map(([t, icon, fade, line, kind], i) => (
              <Tab key={i} $active={kind === 'active'} $line={line}>
                {kind === 'active' && <TabFoot />}
                {icon}<TabText $fade={fade} $tight={kind === 'rec'}>{t}</TabText>
                {kind === 'rec' && <Slot $w={25} $h={20}><RecDot /></Slot>}
                <Slot $w={17} $h={20}><X size={13} strokeWidth={2.600} /></Slot>
              </Tab>
            ))}
            <Slot $w={22} $ml={5}><Plus size={16} strokeWidth={2.300} /></Slot>
            <Grow />
            <Slot $w={47}><S w={11} h={2} v="0 0 11 2" sw={1.200}><path d="M.5 1h10" /></S></Slot>
            <Slot $w={47}><Restore s={12} c="#ddd" /></Slot>
            <Slot $w={48}><S w={12} v="0 0 12 12" sw={1.200}><path d="M.6.600l10.800 10.800M11.400.600.600 11.400" /></S></Slot>
          </TabStrip>
          <BarBack><BrowserBar>
            <Slot $w={38} $ml={4}><ArrowLeft size={17} strokeWidth={2.300} /></Slot>
            <Slot $w={37} $c="#8a8a8a"><ArrowRight size={17} strokeWidth={2.300} /></Slot>
            <Slot $w={38}><RotateCw size={15} strokeWidth={2.600} /></Slot>
            <Omni>
              <TuneBtn><Tune /></TuneBtn>
              <Url><b>docs.google.com</b>/spreadsheets/d/1rFMimDSt1HwSrbJ_kdA4X136i7TMOUuoeVs1TZfkojY/edit?gid=0#gid=0</Url>
              <Slot $w={30} $c="#d0d0d0"><ZoomOut size={17} strokeWidth={2} /></Slot>
              <Slot $w={36} $c="#d0d0d0"><Star size={17} strokeWidth={2} /></Slot>
            </Omni>
            <Slot $w={38} $ml={11.500}><Mail /></Slot>
            <Slot $w={37.500}><HandIcon /></Slot>
            <Slot $w={37.500}><Feather /></Slot>
            <Slot $w={37.500}><Cookie /></Slot>
            <Slot $w={37.500}><PurpleRound /></Slot>
            <Slot $w={37.500}><Puzzle /></Slot>
            <Rule $w={2} $h={16} $c="#111" $ml={8} />
            <Slot $w={37} $ml={8.500}><Photo /></Slot>
            <Slot $w={37}><MoreVertical size={18} strokeWidth={2.600} /></Slot>
          </BrowserBar></BarBack>
          <Bookmarks>
            {marks.map(([t, icon, w], i) => <Bookmark key={i} $w={w}><Slot $w={18} $h={18}>{icon}</Slot>{t}</Bookmark>)}
            <Slot $w={20} $ml={3.500}><ChevronsRight size={17} strokeWidth={2.300} /></Slot>
            <Rule $w={2} $h={16} $c="#0c0c0c" $ml={13} />
            <Bookmark $w={120}><Slot $w={18} $h={18} $ml={16}><Folder size={18} strokeWidth={1.800} color="#c8c8c8" /></Slot>All Bookmarks</Bookmark>
          </Bookmarks>

          <Sheet>
            <Grid>
              {rows.map(r => <Row key={r[0]} data={r} />)}
              <EmptyRow /><EmptyRow />
              <TitleRow text="Left Join" /><HeadRow />
              {rows.map(r => <Row key={r[0]} data={r} />)}
              {extra.map((r, i) => <Row key={r[0]} data={r} bg="#f6c998" line="#e6bc90" sel={i === 0} />)}
              <EmptyRow /><EmptyRow />
              <TitleRow text="Right Join" /><HeadRow />
              {rows.slice(0, 3).map(r => <Row key={r[0]} data={r} />)}
            </Grid>
          </Sheet>

          <InnerBar>
            <GhostWeather><Cloudy s={27} /><div>29°C<br />Mostly cloudy</div><Badge $x={255} $y={5} $s={17} $bg="#dd7571" $c="#111" $f={12}>1</Badge></GhostWeather>
            <WinLogo s={26} dim />
            <InnerSearch><Search size={17} strokeWidth={2} /><span>Search</span><Grow /><Watch /></InnerSearch>
            <Slot $w={46} $ml={1}><TaskViewIcon s={26} /></Slot>
            <Slot $w={46}><FolderApp s={26} /></Slot>
            <Slot $w={46}><Monitor /></Slot>
            <Slot $w={45.500}><Firefox /></Slot>
            <Slot $w={46}><Tile $s={39} $h={42} $on $bar={17} $b={0}><ChromeLogo s={25} /><Badge $x={1} $y={2} $s={16}><Photo s={17} /></Badge></Tile></Slot>
            <Slot $w={46}><Tile $s={39} $h={42} $bar={6} $b={0}><TeamsLogo s={23} light /><Badge $x={1} $y={3} $s={17} $bg="#4db7ee" $c="#14222e" $f={12}>1</Badge></Tile></Slot>
            <Slot $w={33.300} $ml={59.500}><ChevronUp size={16} strokeWidth={2.500} /></Slot>
            <Slot $w={33.300}><Usb /></Slot>
            <Slot $w={33.300}><Nvidia /></Slot>
            <Slot $w={33.300}><RoundSync /></Slot>
            <Slot $w={33.300}><TeamsLogo s={17} light /></Slot>
            <Slot $w={33.300}><ColorFan /></Slot>
            <Slot $w={33.300}><CloudSmall /></Slot>
            <Slot $w={33.300}><Swirl /></Slot>
            <Slot $w={33.300}><Shield /></Slot>
            <Slot $w={33.300}><svg width="13" height="17" viewBox="0 0 13 17"><rect width="13" height="17" rx="6" fill="#1683e0" /><path d="M3.500 5.500l6 6-3 3v-12l3 3-6 6" stroke="#fff" strokeWidth="1.200" fill="none" /></svg></Slot>
            <Slot $w={33.300} $c="#8fd0d4"><Mic size={17} strokeWidth={2} /></Slot>
            <Slot $w={33.300}><Pen2 /></Slot>
            <Lang $w={46} $s={12.600} $lh={17} />
            <Slot $w={24} $ml={4}><Wifi size={18} strokeWidth={2} /></Slot>
            <Slot $w={26}><VolumeX size={17} strokeWidth={1.800} /></Slot>
            <Slot $w={26}><BatteryIcon w={18} charge /></Slot>
            <Clock $w={76} $s={12.600} $lh={17} $align="right" />
            <Slot $w={26} $ml={4}><svg width="17" height="17" viewBox="0 0 17 17"><path d="M2.500 12V6.500A5 5 0 0 1 8 1.500h5V12l1.500 1.500H1.500z" fill="#fff" /><path d="M5.500 15a2.500 2 0 0 0 5 0z" fill="#fff" /><path d="M6 5h3.500L6 9.500h3.500M11.500 2h3L11.500 5h3" stroke="#22252e" strokeWidth="1.200" fill="none" /></svg></Slot>
            <Slot $w={40} $ml={5}><Copilot s={24} /></Slot>
            <Overlay $x={8} $w={227}>Ragav Kumar V (Unverified)<MicMuted s={17} /></Overlay>
            <Overlay $x={245} $w={83}><Slot $w={26} $ml={0} $c="#666"><Minus size={18} strokeWidth={1.800} /></Slot><Slot $w={26} $ml={2}><Plus size={20} strokeWidth={1.500} /></Slot></Overlay>
          </InnerBar>

          <Pen>
            <svg width="35" height="35" viewBox="0 0 35 35"><circle cx="17.500" cy="17.500" r="17.500" fill="#000" /><path d="M11 5.500h13l5 12-6.500 11-1.500 3h-7l-1.500-3L6 17.500z" fill="#fff" /><path d="M17.500 15v16.500" stroke="#000" strokeWidth="1.500" /><circle cx="17.500" cy="15" r="3.800" fill="#000" /></svg>
            <PenPanel>
              {penItems.map(([icon, on, more, dot], i) => <PenItem key={i} $on={on} $more={more} $dot={dot}>{icon}</PenItem>)}
              <Swatches><Swatch $c="#0db0ee" /><Swatch $c="#fff000" /><Swatch $c="#ff1490" /><Swatch $c="#000" /><Swatch $c="#fff000" $span={2} /></Swatches>
            </PenPanel>
          </Pen>
        </Shared>

        <Roster>
          <People>
            {people.map(([i, n, bg, c]) => <Person key={i + n}><Avatar $bg={bg} $c={c}>{i}</Avatar><PersonName>{n}<MicMuted /></PersonName></Person>)}
            <Person>
              <Avatar $bg="#2b2b2b" $c="#fff" $ring><S w={25} h={5} v="0 0 25 5" sw={0}><g fill="#fff"><circle cx="2.500" cy="2.500" r="2.200" /><circle cx="12.500" cy="2.500" r="2.200" /><circle cx="22.500" cy="2.500" r="2.200" /></g></S></Avatar>
              <PersonName>View all</PersonName>
            </Person>
          </People>
          <SelfTile><Avatar $s={70} $f={28} $bg="#f7e9cd" $c="#7d5a12">AM</Avatar></SelfTile>
        </Roster>
      </Stage>

      <Taskbar>
        <Cloudy s={32} />
        <TwoLine $w={140} $ml={8} $s={15.300} $lh={20} $align="left">29°C<br />Mostly cloudy</TwoLine>
        <Slot $w={30} $ml={380}><WinLogo /></Slot>
        <SearchBox><Search size={20} strokeWidth={2} /><span>Search</span><Grow /><Promo><svg width="9" height="9" viewBox="0 0 9 9"><circle cx="4.500" cy="4.500" r="3.700" fill="none" stroke="#e8681f" strokeWidth="1.300" /><circle cx="4.500" cy="4.500" r="1.300" fill="#e8681f" /></svg>proclink</Promo></SearchBox>
        <Slot $w={55} $ml={2.500}><Copilot /></Slot>
        <Slot $w={55}><TaskViewIcon /></Slot>
        <Slot $w={55}><Tile $s={50} $h={50} $bar={6} $bh={4}><FolderApp /></Tile></Slot>
        <Slot $w={55}><Edge /></Slot>
        <Slot $w={55}><Store /></Slot>
        <Slot $w={55}><Tile $s={50} $h={50} $bar={6} $bh={4}><ChromeLogo s={30} /></Tile></Slot>
        <Slot $w={55}><Tile $s={50} $h={50} $bar={6} $bh={4}><VsCode /></Tile></Slot>
        <Slot $w={55}><Tile $s={50} $h={50} $on $edge $bar={20} $bh={4}><TeamsLogo s={27} badge /><Badge $x={4} $y={4} $s={20} $bg="#c42b1c" $c="#fff" $f={15}>1</Badge></Tile></Slot>
        <Grow />
        <Slot $w={40}><ChevronUp size={20} strokeWidth={2.200} /></Slot>
        <Slot $w={41}><S w={22} v="0 0 22 22" sw={1.200}><path d="M2 9A9 9 0 0 1 19 6M20 1v5.500h-5.500M1.500 20v-5H7M2 15a9 9 0 0 0 6 5" /><circle cx="16" cy="16" r="5" fill="#f00" stroke="none" /></S></Slot>
        <Slot $w={39}><CloudSmall off w={22} /></Slot>
        <MicTile><svg width="14" height="20" viewBox="0 0 14 20"><rect x="3.200" y="0" width="7.600" height="13" rx="3.800" fill="#0a0a0a" /><path d="M.8 9a6.200 6.200 0 0 0 12.400 0M7 15.500V20" stroke="#0a0a0a" strokeWidth="1.500" fill="none" /></svg></MicTile>
        <Lang $w={56} $s={15.300} $lh={20} />
        <Slot $w={30} $ml={4}><Wifi size={22} strokeWidth={1.800} /></Slot>
        <Slot $w={30}><VolumeX size={21} strokeWidth={1.500} /></Slot>
        <Slot $w={30}><BatteryIcon w={20} /></Slot>
        <Clock $w={93} $s={15.500} $lh={20} $align="right" />
        <Slot $w={38}><Bell size={20} strokeWidth={1.600} /></Slot>
        <Slot $w={16} />
      </Taskbar>
    </Page>
  );
}
